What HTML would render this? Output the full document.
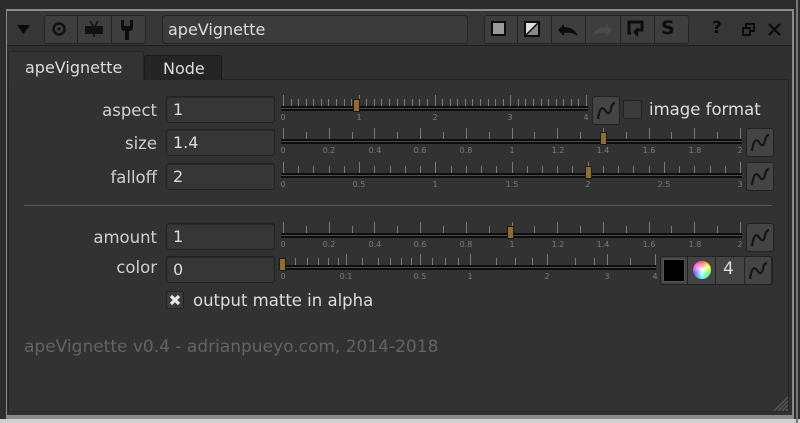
<!DOCTYPE html>
<html><head><meta charset="utf-8"><style>
*{margin:0;padding:0;box-sizing:border-box}
body{width:800px;height:423px;background:#2c2c2c;position:relative;overflow:hidden;font-family:"DejaVu Sans","Liberation Sans",sans-serif;color:#d6d6d6}
.a{position:absolute}
.btn{position:absolute;background:#3e3e3e;border:1px solid #242424;border-radius:3px}
.inp{position:absolute;background:#363636;border:1px solid #222;border-radius:3px;height:27px;width:109px;left:166px;font-size:16px;color:#ddd;padding:3px 0 0 6px;box-shadow:inset 0 1px 0 #2a2a2a}
.lbl{position:absolute;right:643px;font-size:16.5px;color:#d0d0d0;text-align:right}
.curve{position:absolute;width:28px;height:29px;background:#444;border:1px solid #222;border-radius:3px}
.curve svg{position:absolute;left:3px;top:4px}
.tick{position:absolute;width:1px;background:#7a7a7a}
.tl{position:absolute;font-size:8px;color:#7a7a7a;transform:translateX(-50%)}
.trk{position:absolute;height:5px;border-top:2px solid #0e0e0e;border-bottom:2px solid #0e0e0e;background:#4a4a4a}
.thumb{position:absolute;width:7px;height:13px;background:#8a6e33;border:1px solid #1a1a1a}
</style></head><body>
<div class="a" style="left:6px;top:9px;width:788px;height:412px;background:#8a8a8a"></div>
<div class="a" style="left:7px;top:11px;width:785px;height:404px;background:#303030"></div>
<div class="a" style="left:0;top:419px;width:800px;height:4px;background:#cfcfcf"></div>
<div class="a" style="left:796px;top:0;width:2px;height:423px;background:#777"></div>
<div class="a" style="left:7px;top:11px;width:785px;height:35px;background:#363636;border-bottom:1px solid #1f1f1f"></div>
<svg class="a" style="left:17px;top:25px" width="13" height="10"><polygon points="0,0 13,0 6.5,9" fill="#0a0a0a"/></svg>
<div class="btn" style="left:44px;top:15px;width:102px;height:29px"></div>
<div class="a" style="left:77px;top:16px;width:1px;height:27px;background:#222"></div>
<div class="a" style="left:111px;top:16px;width:1px;height:27px;background:#222"></div>
<svg class="a" style="left:52px;top:22px" width="14" height="14"><circle cx="7" cy="7" r="5.5" fill="none" stroke="#111" stroke-width="2.5"/><circle cx="7" cy="7" r="1.6" fill="#111"/></svg>
<svg class="a" style="left:84px;top:20px" width="20" height="18"><line x1="6" y1="1" x2="9" y2="6" stroke="#111" stroke-width="1.5"/><line x1="14" y1="1" x2="11" y2="6" stroke="#111" stroke-width="1.5"/><rect x="1" y="6" width="18" height="8" fill="#111"/><line x1="10" y1="14" x2="10" y2="17" stroke="#111" stroke-width="1.5"/></svg>
<svg class="a" style="left:119px;top:19px" width="16" height="22"><path d="M2 1 L2 8 Q2 12 6 12 L6 21 L10 21 L10 12 Q14 12 14 8 L14 1 L11 1 L11 7 L5 7 L5 1 Z" fill="#0c0c0c"/></svg>
<div class="a" style="left:162px;top:15px;width:306px;height:29px;background:#3b3b3b;border:1px solid #242424;border-radius:4px;font-size:16px;color:#ddd;padding:4px 0 0 5px">apeVignette</div>
<div class="btn" style="left:484px;top:15px;width:205px;height:29px"></div>
<div class="a" style="left:517px;top:16px;width:1px;height:27px;background:#222"></div>
<div class="a" style="left:551px;top:16px;width:1px;height:27px;background:#222"></div>
<div class="a" style="left:585px;top:16px;width:1px;height:27px;background:#222"></div>
<div class="a" style="left:620px;top:16px;width:1px;height:27px;background:#222"></div>
<div class="a" style="left:654px;top:16px;width:1px;height:27px;background:#222"></div>
<div class="a" style="left:491px;top:21px;width:15px;height:15px;background:#9a9a9a;border:2px solid #0c0c0c"></div>
<svg class="a" style="left:524px;top:21px" width="16" height="16"><rect x="1" y="1" width="14" height="14" fill="#ddd" stroke="#0c0c0c" stroke-width="2"/><polygon points="14,2 14,14 2,14" fill="#8a8a8a"/><line x1="2" y1="14" x2="14" y2="2" stroke="#0c0c0c" stroke-width="1.5"/></svg>
<svg class="a" style="left:557px;top:22px" width="22" height="16"><path d="M1 8 L7 2 L7 5 Q17 5 21 14 Q15 10 7 11 L7 14 Z" fill="#0c0c0c"/></svg>
<svg class="a" style="left:591px;top:22px" width="22" height="16"><path d="M21 8 L15 2 L15 5 Q5 5 1 14 Q7 10 15 11 L15 14 Z" fill="#4a4a4a"/></svg>
<svg class="a" style="left:627px;top:19px" width="18" height="20"><path d="M4 14 L2 14 L2 3 L15 3 L15 11 L10 11" fill="none" stroke="#0c0c0c" stroke-width="3"/><polygon points="6,13 11,8 11,18" fill="#0c0c0c"/></svg>
<div class="a" style="left:661px;top:17px;font-size:19px;font-weight:bold;color:#0c0c0c">S</div>
<div class="a" style="left:712px;top:18px;font-size:17px;font-weight:bold;color:#0c0c0c">?</div>
<svg class="a" style="left:742px;top:23px" width="13" height="13"><rect x="4" y="1" width="8" height="7" fill="none" stroke="#0c0c0c" stroke-width="2"/><rect x="1" y="5" width="7" height="7" fill="#363636" stroke="#0c0c0c" stroke-width="2"/></svg>
<svg class="a" style="left:768px;top:23px" width="13" height="13"><path d="M1 1 L12 12 M12 1 L1 12" stroke="#0c0c0c" stroke-width="2.2"/></svg>
<div class="a" style="left:8px;top:51px;width:136px;height:30px;background:#333;border:1px solid #262626;border-bottom:none;border-radius:3px 3px 0 0;font-size:16px;color:#ddd;padding:6px 0 0 16px">apeVignette</div>
<div class="a" style="left:144px;top:55px;width:78px;height:25px;background:#252525;border:1px solid #1a1a1a;border-radius:3px 3px 0 0;font-size:16px;color:#ddd;padding:3px 0 0 18px">Node</div>
<div class="a" style="left:8px;top:79px;width:781px;height:333px;background:#323232;border:1px solid #262626;border-top:1px solid #242424"></div>
<div class="a" style="left:9px;top:79px;width:134px;height:2px;background:#333"></div>
<div class="lbl" style="top:101px">aspect</div>
<div class="inp" style="top:96px">1</div>
<div class="lbl" style="top:134px">size</div>
<div class="inp" style="top:129px">1.4</div>
<div class="lbl" style="top:168px">falloff</div>
<div class="inp" style="top:163px">2</div>
<div class="a" style="left:24px;top:205px;width:748px;height:1px;background:#555"></div>
<div class="lbl" style="top:228px">amount</div>
<div class="inp" style="top:223px">1</div>
<div class="lbl" style="top:258px">color</div>
<div class="inp" style="top:256px">0</div>
<div id="sl"></div>
<div class="a" style="left:660px;top:256px;width:113px;height:29px;background:#444;border:1px solid #222;border-radius:3px"></div>
<div class="curve" style="left:592px;top:96px"></div>
<div class="curve" style="left:746px;top:128px"></div>
<div class="curve" style="left:746px;top:162px"></div>
<div class="curve" style="left:746px;top:223px"></div>
<div class="curve" style="left:744px;top:256px"></div>
<div class="a" style="left:623px;top:100px;width:19px;height:19px;background:#3a3a3a;border:1px solid #222;border-radius:2px"></div>
<div class="a" style="left:649px;top:100px;font-size:16.5px;color:#ddd">image format</div>
<div class="a" style="left:663px;top:259px;width:22px;height:23px;background:#000;border:1px solid #555"></div>
<div class="a" style="left:687px;top:257px;width:1px;height:27px;background:#222"></div>
<div class="a" style="left:715px;top:257px;width:1px;height:27px;background:#222"></div>
<div class="a" style="left:693px;top:261px;width:18px;height:18px;border-radius:50%;background:radial-gradient(circle,#fff 0%,rgba(255,255,255,0) 70%),conic-gradient(#f55,#ff5,#5f5,#5ff,#55f,#f5f,#f55)"></div>
<div class="a" style="left:723px;top:259px;font-size:17px;color:#ddd">4</div>
<div class="a" style="left:166px;top:291px;width:18px;height:18px;background:#3a3a3a;border:1px solid #222;border-radius:2px"></div>
<svg class="a" style="left:169px;top:294px" width="12" height="12"><path d="M2 2 L10 10 M10 2 L2 10" stroke="#e8e8e8" stroke-width="3.2"/></svg>
<div class="a" style="left:193px;top:291px;font-size:16.5px;color:#ddd">output matte in alpha</div>
<div class="a" style="left:24px;top:337px;font-size:17px;color:#636363">apeVignette v0.4 - adrianpueyo.com, 2014-2018</div>
<svg class="a" style="left:773px;top:397px" width="16" height="15"><path d="M1 14 L15 0 M5 14 L15 4 M9 14 L15 8 M13 14 L15 12" stroke="#555" stroke-width="1.5"/></svg>
<script>
var h='';
function slider(x0,x1,y,minor,major,labels,thumb){
 h+='<div class="trk" style="left:'+x0+'px;top:'+y+'px;width:'+(x1-x0)+'px"></div>';
 minor.forEach(function(p){h+='<div class="tick" style="left:'+p+'px;top:'+(y-7)+'px;height:7px"></div>'});
 major.forEach(function(p){h+='<div class="tick" style="left:'+p+'px;top:'+(y-11)+'px;height:11px"></div>'});
 labels.forEach(function(l){h+='<div class="tl" style="left:'+l[0]+'px;top:'+(y+7)+'px">'+l[1]+'</div>'});
 if(thumb)h+='<div class="thumb" style="left:'+(thumb-4)+'px;top:'+(y-7)+'px"></div>';
}
function lin(x0,x1,n){var a=[];for(var i=0;i<=n;i++)a.push(Math.round(x0+(x1-x0)*i/n));return a}
slider(281,588,106,lin(283,586,40),lin(283,586,4),[[283,0],[359,1],[435,2],[510,3],[586,4]],357);
slider(281,742,139,lin(283,740,20),lin(283,740,10),[[283,0],[329,'0.2'],[375,'0.4'],[420,'0.6'],[466,'0.8'],[512,1],[558,'1.2'],[603,'1.4'],[649,'1.6'],[695,'1.8'],[740,2]],604);
slider(281,742,173,lin(283,740,30),lin(283,740,6),[[283,0],[359,'0.5'],[435,1],[512,'1.5'],[588,2],[664,'2.5'],[740,3]],589);
slider(281,742,233,lin(283,740,20),lin(283,740,10),[[283,0],[329,'0.2'],[375,'0.4'],[420,'0.6'],[466,'0.8'],[512,1],[558,'1.2'],[603,'1.4'],[649,'1.6'],[695,'1.8'],[740,2]],511);
slider(281,656,265,[295,307,318,328,338,362,378,390,401,411,432,445,458,496,515,532,575,594,630],[346,420,470,547,607,655],[[283,0],[346,'0.1'],[420,'0.5'],[470,1],[547,2],[607,3],[655,4]],283);
document.getElementById('sl').innerHTML=h;
var cs=document.querySelectorAll('.curve');
for(var i=0;i<cs.length;i++)cs[i].innerHTML='<svg width="21" height="20"><path d="M2 18 Q4 3 9 9 Q13 16 15 8 Q16 2 19 2" fill="none" stroke="#151515" stroke-width="2.2"/></svg>';
</script>
</body></html>
